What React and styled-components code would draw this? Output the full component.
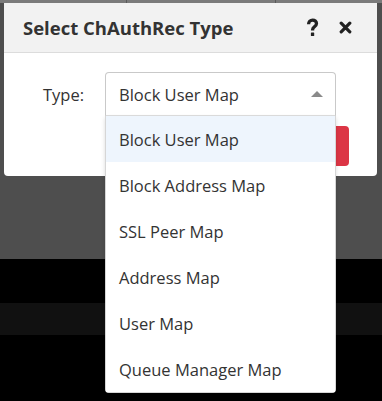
import React from "react";
import styled, { createGlobalStyle } from "styled-components";

const GlobalStyle = createGlobalStyle`
  html, body { margin: 0; padding: 0; }
  body { font-family: "Open Sans", "Noto Sans", sans-serif; }
`;

const Page = styled.div`
  position: relative;
  width: 382px;
  height: 401px;
  overflow: hidden;
  display: flex;
  flex-direction: column;
  background: #000;
`;

const TopStrip = styled.div`
  height: 3px;
  background: #7b7b7b;
  display: grid;
  grid-template-columns: 126px 149px 1fr;
  & > div + div { border-left: 1px solid #5a5a5a; }
`;

const Band = styled.div`
  height: ${(p) => p.$h}px;
  background: ${(p) => p.$bg};
  flex: ${(p) => (p.$grow ? 1 : "none")};
`;

const Dialog = styled.div`
  position: absolute;
  left: 4px;
  top: 3px;
  width: 373px;
  background: #fff;
  border-radius: 0 0 4px 4px;
  display: flex;
  flex-direction: column;
`;

const Header = styled.div`
  height: 49px;
  background: #f2f2f2;
  border-bottom: 1px solid #dcdcdc;
  display: flex;
  align-items: center;
  padding: 0 25px 0 19px;
`;

const Title = styled.h2`
  margin: 0;
  flex: 1;
  font-size: 18.5px;
  font-weight: 700;
  color: #333;
  letter-spacing: 0;
`;

const HeaderIcons = styled.div`
  display: flex;
  align-items: center;
  gap: 20px;
  color: #222;
`;

const Body = styled.div`
  padding: 19px 28px 10px 0;
  display: flex;
  flex-direction: column;
  gap: 10px;
`;

const FieldRow = styled.div`
  display: flex;
  align-items: center;
`;

const Label = styled.label`
  width: 80px;
  text-align: right;
  font-size: 16.5px;
  color: #333;
  margin-right: 21px;
`;

const SelectBox = styled.div`
  position: relative;
  height: 42px;
  border: 1px solid #c9c9c9;
  border-bottom-color: #dedede;
  border-radius: 4px 4px 0 0;
  display: flex;
  align-items: center;
  padding: 0 12px 0 13px;
  box-sizing: content-box;
  width: 204px;
  font-size: 16.5px;
  color: #333;
`;

const SelectValue = styled.span`
  flex: 1;
`;

const Menu = styled.ul`
  position: absolute;
  top: 100%;
  left: -1px;
  right: -1px;
  margin: 1px 0 0;
  padding: 0;
  list-style: none;
  background: #fff;
  border: 1px solid #d6d6d6;
  border-top: none;
  border-radius: 0 0 4px 4px;
  box-shadow: 0 2px 4px rgba(0, 0, 0, 0.15);
  z-index: 2;
`;

const Item = styled.li`
  height: 46px;
  display: flex;
  align-items: center;
  padding-left: 13px;
  font-size: 16.5px;
  color: #333;
  background: ${(p) => (p.$active ? "#eef5fd" : "#fff")};
`;

const ButtonRow = styled.div`
  display: flex;
  justify-content: flex-end;
`;

const DangerButton = styled.button`
  width: 90px;
  height: 40px;
  border: none;
  border-radius: 4px;
  background: #dc3545;
  color: #fff;
  font-family: inherit;
  font-size: 15px;
`;

const options = [
  "Block User Map",
  "Block Address Map",
  "SSL Peer Map",
  "Address Map",
  "User Map",
  "Queue Manager Map",
];

export default function App() {
  return (
    <>
      <GlobalStyle />
      <Page>
        <TopStrip>
          <div />
          <div />
          <div />
        </TopStrip>
        <Band $h={256} $bg="#4e4e4e" />
        <Band $h={44} $bg="#000" />
        <Band $h={32} $bg="#111" />
        <Band $grow $bg="#000" />
        <Dialog>
          <Header>
            <Title>Select ChAuthRec Type</Title>
            <HeaderIcons>
              <svg width="13" height="19" viewBox="0 0 13 19">
                <path
                  d="M2.6 6.3C2.6 3.6 4.4 2.1 6.6 2.1c2.3 0 3.9 1.4 3.9 3.4 0 1.7-1 2.5-2.2 3.3-1.3.9-1.7 1.6-1.7 3v.6"
                  stroke="currentColor"
                  strokeWidth="3.3"
                  fill="none"
                />
                <rect x="4.9" y="14.6" width="3.3" height="3.5" rx="0.4" fill="currentColor" />
              </svg>
              <svg width="13" height="13" viewBox="0 0 13 13">
                <path
                  d="M2.2 2.2l8.6 8.6M10.8 2.2l-8.6 8.6"
                  stroke="currentColor"
                  strokeWidth="3.2"
                  strokeLinecap="round"
                />
              </svg>
            </HeaderIcons>
          </Header>
          <Body>
            <FieldRow>
              <Label>Type:</Label>
              <SelectBox>
                <SelectValue>Block User Map</SelectValue>
                <svg width="12" height="6" viewBox="0 0 12 6">
                  <path d="M0 6L6 0l6 6z" fill="#8a8a8a" />
                </svg>
                <Menu>
                  {options.map((o, i) => (
                    <Item key={o} $active={i === 0}>
                      {o}
                    </Item>
                  ))}
                </Menu>
              </SelectBox>
            </FieldRow>
            <ButtonRow>
              <DangerButton>OK</DangerButton>
            </ButtonRow>
          </Body>
        </Dialog>
      </Page>
    </>
  );
}
